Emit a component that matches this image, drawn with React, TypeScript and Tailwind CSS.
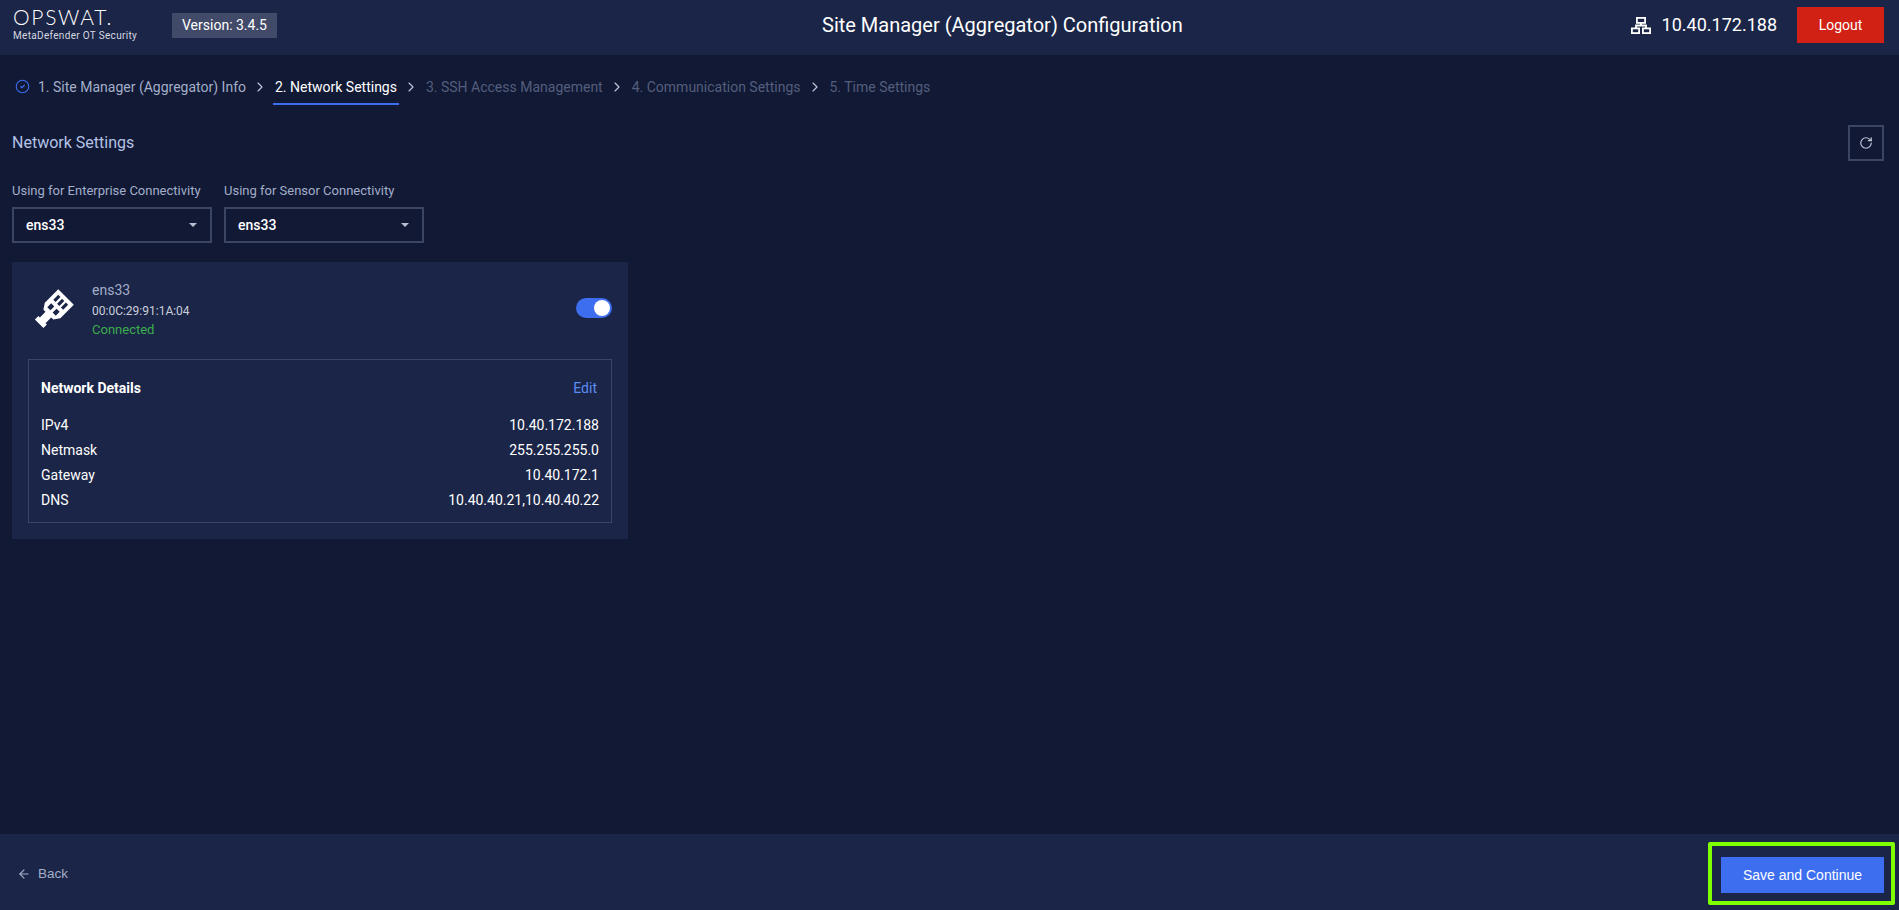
import { ArrowLeft, ChevronRight, CircleCheck, RotateCw } from "lucide-react";

const steps = [
  { label: "1. Site Manager (Aggregator) Info", state: "done" },
  { label: "2. Network Settings", state: "active" },
  { label: "3. SSH Access Management", state: "todo" },
  { label: "4. Communication Settings", state: "todo" },
  { label: "5. Time Settings", state: "todo" },
];

const details = [
  { name: "IPv4", value: "10.40.172.188" },
  { name: "Netmask", value: "255.255.255.0" },
  { name: "Gateway", value: "10.40.172.1" },
  { name: "DNS", value: "10.40.40.21,10.40.40.22" },
];

const selects = [
  { label: "Using for Enterprise Connectivity", value: "ens33" },
  { label: "Using for Sensor Connectivity", value: "ens33" },
];

const NetworkIcon = () => (
  <svg width="20" height="17" viewBox="0 0 20 17" fill="none" stroke="white" strokeWidth="1.8">
    <rect x="5.9" y="0.9" width="8.2" height="5" />
    <path d="M10 6V8.5M5 11.5V8.5H15V11.5" />
    <rect x="0.9" y="11.4" width="7.2" height="4.7" />
    <rect x="11.9" y="11.4" width="7.2" height="4.7" />
  </svg>
);

const EthernetIcon = () => (
  <svg width="40" height="40" viewBox="0 0 40 40" className="overflow-visible">
    <g transform="rotate(45 20 20)">
      <path
        fill="white"
        fillRule="evenodd"
        d="M9 3H31V22L27 28H24V36H26V41H14V36H16V28H13L9 22ZM13 7V14H16.2V7ZM18.4 7V14H21.6V7ZM23.8 7V14H27V7ZM14 18V23.5H18.4V18ZM21.6 18V23.5H26V18Z"
      />
    </g>
  </svg>
);

export default function App() {
  return (
    <div className="flex h-[910px] flex-col overflow-hidden bg-[#111935] font-['Roboto',sans-serif] text-white">
      {/* Header */}
      <header className="flex h-[55px] shrink-0 items-center bg-[#1b2547] pb-[5px] pl-[13px] pr-[15px]">
        <div className="mb-[3px] w-[124px] shrink-0">
          <div className="font-['Lato',sans-serif] text-[21px] font-light leading-[23px] tracking-[1.7px] text-white">
            OPSWAT.
          </div>
          <div className="mt-[2px] whitespace-nowrap text-[10px] leading-[12px] tracking-[0.32px] text-[#d5d8e0]">
            MetaDefender OT Security
          </div>
        </div>
        <div className="ml-[35px] flex h-[25px] w-[105px] items-center justify-center bg-[#414a68] text-sm">
          Version: 3.4.5
        </div>
        <h1 className="ml-[545px] whitespace-nowrap text-xl font-normal">
          Site Manager (Aggregator) Configuration
        </h1>
        <div className="ml-auto flex items-center">
          <NetworkIcon />
          <span className="ml-[11px] text-lg">10.40.172.188</span>
          <button className="ml-[20px] h-[36px] w-[87px] bg-[#d12114] text-sm">Logout</button>
        </div>
      </header>

      {/* Stepper */}
      <nav className="flex h-[50px] shrink-0 items-start pl-[15px] pt-[21px] text-sm">
        {steps.map((step, i) => (
          <div key={step.label} className="flex items-start">
            {step.state === "done" && (
              <CircleCheck size={15} strokeWidth={1.75} className="mr-[6px] mt-[3px] text-[#3d6ef0]" />
            )}
            <div
              className={
                step.state === "active"
                  ? "h-[29px] border-b-2 border-[#3d6ef0] px-[2px] leading-[22px] text-white"
                  : step.state === "done"
                    ? "h-[29px] px-[2px] leading-[22px] text-[#a3aec9]"
                    : "h-[29px] px-[2px] leading-[22px] text-[#545e7c]"
              }
            >
              {step.label}
            </div>
            {i < steps.length - 1 && (
              <ChevronRight size={16} strokeWidth={1.75} className="mx-[4.5px] mt-[3px] text-[#c0c6d6]" />
            )}
          </div>
        ))}
      </nav>

      {/* Content */}
      <main className="flex-1 px-[12px]">
        <div className="flex h-[56px] items-end justify-between">
          <h2 className="mb-[6px] text-base font-normal text-[#b4c2e6]">Network Settings</h2>
          <button className="mr-[3px] flex h-[36px] w-[36px] items-center justify-center border-2 border-[#3c4663]">
            <RotateCw size={14} className="text-[#c0c6d6]" />
          </button>
        </div>

        <div className="mt-[20px] flex gap-[12px]">
          {selects.map((s) => (
            <div key={s.label} className="w-[200px]">
              <div className="whitespace-nowrap text-[13px] leading-[20px] text-[#a3aec9]">{s.label}</div>
              <div className="mt-[6px] flex h-[36px] items-center justify-between border-2 border-[#3c4663] pb-[1px] pl-[12px] pr-[13px] text-sm font-medium">
                {s.value}
                <span className="h-0 w-0 border-x-[4px] border-t-[4px] border-x-transparent border-t-[#b8bfd0]" />
              </div>
            </div>
          ))}
        </div>

        <section className="mt-[19px] w-[616px] bg-[#1b2547] px-[16px] pb-[16px] pt-[16px]">
          <div className="flex h-[81px] items-start">
            <div className="ml-[6px] mt-[11px]">
              <EthernetIcon />
            </div>
            <div className="ml-[18px] mt-[1px] text-xs">
              <div className="mt-[1px] text-sm leading-[20px] text-[#a3aec9]">ens33</div>
              <div className="mt-[2px] leading-[18px] text-[#c9cfdc]">00:0C:29:91:1A:04</div>
              <div className="text-[13px] leading-[20px] text-[#3cae4b]">Connected</div>
            </div>
            <div className="ml-auto mt-[20px] flex h-[20px] w-[36px] items-center justify-end rounded-full bg-[#3d6ef0] pr-[2px]">
              <span className="h-[16px] w-[16px] rounded-full bg-white" />
            </div>
          </div>

          <div className="border border-[#3c4663] px-[12px] pb-[10px]">
            <div className="flex h-[52px] items-center justify-between pr-[2px] pt-[3px] text-sm">
              <span className="font-bold">Network Details</span>
              <span className="text-[#5b8cf5]">Edit</span>
            </div>
            {details.map((d) => (
              <div key={d.name} className="flex h-[25px] items-center justify-between text-sm">
                <span>{d.name}</span>
                <span>{d.value}</span>
              </div>
            ))}
          </div>
        </section>
      </main>

      {/* Footer */}
      <footer className="flex h-[76px] shrink-0 items-center justify-between bg-[#1b2547] pl-[17px] pr-[15px] pt-[6px] font-['Liberation_Sans',sans-serif] text-sm">
        <button className="mb-[2px] flex items-center gap-[7px] text-[13.5px] text-[#a3aec9]">
          <ArrowLeft size={14} strokeWidth={2} />
          Back
        </button>
        <div className="relative">
          <button className="h-[36px] w-[163px] bg-[#3d6ef0]">Save and Continue</button>
          <div className="absolute bottom-[-12px] left-[-13px] right-[-11px] top-[-15px] rounded-[2px] border-[4px] border-[#7fff00]" />
        </div>
      </footer>
    </div>
  );
}
